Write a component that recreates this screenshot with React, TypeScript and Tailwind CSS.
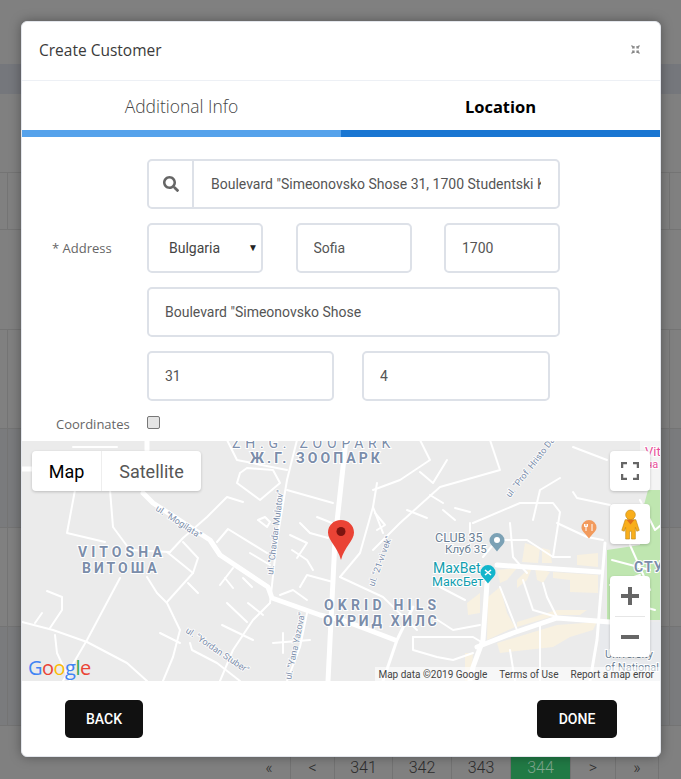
import React from 'react';
import { FaSearch } from 'react-icons/fa';

const inputClass =
  'h-[50px] min-w-0 rounded-[5px] border-2 border-[#dde1e8] bg-white px-[16px] text-[14px] text-[#555] outline-none';

// road polylines, in page coordinates so they line up with the screenshot
const thickRoads = [
  '143,493 153,503 210,540 220,555 268,587 272,598 320,615 345,621 395,640',
  '346,440 335,540 328,681',
  '497,565 600,572',
  '487,583 483,640 473,667 470,681',
  '477,647 513,633 557,618 610,622',
  '22,469 32,469',
  '147,440 147,450',
];

const midRoads = ['605,543 597,640 590,681', '383,681 397,640 413,607'];

const thinRoads = [
  '75,490 67,533 105,542',
  '110,490 113,527 130,550 170,552',
  '170,552 183,538 207,517 227,497 243,502',
  '183,542 198,558 193,573 167,602',
  '167,552 193,573',
  '188,583 198,593',
  '147,577 157,593 167,603 180,630 173,657 163,681',
  '120,578 87,640 63,681',
  '22,622 53,630 87,642 127,663 147,681',
  '47,591 62,597 62,610 50,628',
  '35,623 42,613',
  '55,635 57,653 70,681',
  '160,633 180,643',
  '190,643 192,650 217,663 240,681',
  '270,603 277,540 287,480 297,440',
  '270,603 253,620 233,650 220,681',
  '227,603 247,622',
  '248,603 263,615',
  '222,625 253,640',
  '220,585 233,568',
  '225,578 233,588',
  '243,578 252,587',
  '217,542 228,529 267,553',
  '250,553 270,565',
  '258,520 265,517 270,522 267,527 258,520',
  '287,490 333,503',
  '317,517 332,523',
  '300,523 310,533 328,538',
  '290,535 307,543 297,558',
  '292,550 307,560 313,570',
  '300,587 307,575 333,582',
  '307,613 300,647 287,681',
  '280,595 293,590 307,600',
  '283,633 283,653',
  '273,643 310,640',
  '73,447 117,447',
  '240,473 237,483 260,500 280,483 273,470 247,468 240,473',
  '227,440 237,460 287,470',
  '340,577 383,597 417,630',
  '373,507 360,553 340,577',
  '377,483 373,507 383,533',
  '375,513 385,525 377,530',
  '490,440 500,470 440,487 400,523 373,550',
  '473,523 520,503 553,503 560,512 553,557',
  '560,478 540,490 533,520',
  '573,492 577,498 610,505',
  '557,523 587,537 603,540',
  '470,523 470,533',
  '510,523 513,557 527,573',
  '483,557 497,540 527,540 553,557 570,557',
  '523,580 533,610 557,617',
  '500,587 517,630',
  '543,583 547,597 557,617',
  '413,637 473,637 483,643',
  '413,637 413,650 437,657 453,660 473,653',
  '420,472 433,483 447,460',
  '407,510 427,518',
  '430,495 443,503',
  '443,510 455,520',
  '455,508 470,512',
  '420,440 430,460 400,480 373,490',
  '573,447 607,460',
  '640,500 655,530 661,525',
  '612,560 650,570',
  '618,600 655,610',
  '630,545 650,590',
  '610,585 640,575',
  '440,587 465,600',
  '433,617 453,630 480,625',
  '540,625 540,681',
  '510,650 515,681',
];

const beige = [
  'M467 603L480 593L480 613L468 615Z',
  'M488 597L500 587L507 613L515 627L487 640Z',
  'M497 570L517 568L507 580L500 583Z',
  'M517 580L527 570L532 568L527 580L517 588Z',
  'M535 568L550 572L543 583L537 580Z',
  'M525 543L540 548L538 563L522 562Z',
  'M542 548L550 550L552 563L542 563Z',
  'M577 555L598 553L598 567L577 565Z',
  'M553 572L598 575L598 593L570 592L570 580L553 578Z',
  'M517 622L557 610L587 610L580 615L557 615L517 627Z',
  'M497 643L557 625L597 622L593 630L570 637L553 647L500 653Z',
  'M465 653L473 653L471 681L465 681Z',
];

const Label = ({ x, y, size, spacing, weight = 700, children }: { x: number; y: number; size: number; spacing: number; weight?: number; children: string }) => (
  <text x={x} y={y} fontSize={size} letterSpacing={spacing} fontWeight={weight} fill="#7b8daa" stroke="#fff" strokeWidth={2} paintOrder="stroke" fontFamily="Roboto, sans-serif">
    {children}
  </text>
);

const RoadName = ({ x, y, angle, children }: { x: number; y: number; angle: number; children: string }) => (
  <text x={x} y={y} transform={`rotate(${angle} ${x} ${y})`} fontSize={9} fill="#7b8daa" stroke="#fff" strokeWidth={1.5} paintOrder="stroke" fontFamily="Roboto, sans-serif">
    {children}
  </text>
);

function MapDrawing() {
  return (
    <svg viewBox="22 441 638 240" className="block h-[240px] w-[638px]">
      <rect x="22" y="441" width="638" height="240" fill="#ebebeb" />
      {/* park */}
      <path d="M648 490H661V620H607V550L640 545L640 520Z" fill="#bfe6b0" />
      <path d="M640 441H661V490H640Z" fill="#f4f4f4" />
      <path d="M600 622H661V681H600Z" fill="#e8eaed" />
      {/* built-up blocks */}
      <g fill="#f8f1e1">
        {beige.map((d) => (
          <path key={d} d={d} />
        ))}
      </g>
      <g fill="none" stroke="#fff" strokeLinejoin="round" strokeLinecap="round">
        <g strokeWidth={2}>
          {thinRoads.map((p) => (
            <polyline key={p} points={p} />
          ))}
        </g>
        <g strokeWidth={3}>
          {midRoads.map((p) => (
            <polyline key={p} points={p} />
          ))}
        </g>
        <g strokeWidth={5}>
          {thickRoads.map((p) => (
            <polyline key={p} points={p} />
          ))}
        </g>
      </g>
      <Label x={232} y={448} size={14} spacing={4.8} weight={400}>ZH.G. ZOOPARK</Label>
      <Label x={250} y={463} size={14} spacing={3.1}>Ж.Г. ЗООПАРК</Label>
      <Label x={78} y={557} size={14} spacing={4.1}>VITOSHA</Label>
      <Label x={82} y={573} size={14} spacing={3}>ВИТОША</Label>
      <Label x={324} y={610} size={14} spacing={4.2}>OKRID HILS</Label>
      <Label x={323} y={626} size={14} spacing={2.7}>ОКРИД ХИЛС</Label>
      <Label x={634} y={572} size={14} spacing={1}>СТУ</Label>
      <RoadName x={155} y={510} angle={33}>ul. "Mogilata"</RoadName>
      <RoadName x={273} y={575} angle={-83}>ul. "Chavdar Mulatov"</RoadName>
      <RoadName x={185} y={632} angle={34}>ul. "Yordan Stuber"</RoadName>
      <RoadName x={291} y={680} angle={-78}>ul. "Yana Yazova"</RoadName>
      <RoadName x={374} y={587} angle={-70}>ul. "21-vi vek"</RoadName>
      <RoadName x={510} y={498} angle={-52}>ul. "Prof. Hristo Danov"</RoadName>
      <g fontFamily="Roboto, sans-serif" stroke="#fff" strokeWidth={2} paintOrder="stroke">
        <text x={435} y={542} fontSize={12.5} fill="#6b7f95">CLUB 35</text>
        <text x={445} y={553} fontSize={11.5} fill="#6b7f95">Клуб 35</text>
        <text x={433} y={573} fontSize={14} fill="#129eaf">MaxBet</text>
        <text x={432} y={586} fontSize={12.5} fill="#129eaf">МаксБет</text>
        <text x={645} y={456} fontSize={13} fill="#e94f9a">Vit</text>
        <text x={646} y={468} fontSize={11} fill="#e94f9a">на</text>
        <text x={605} y={658} fontSize={11} fill="#6b7f95">University</text>
        <text x={605} y={671} fontSize={11} fill="#6b7f95">of National</text>
      </g>
      {/* poi pins */}
      <path d="M497 533a7.500 7.500 0 0 1 7.500 7.500c0 4-4.500 6.500-7.500 11c-3-4.500-7.500-7-7.500-11a7.500 7.500 0 0 1 7.500-7.500Z" fill="#7ba1b5" />
      <circle cx="497" cy="540" r="3" fill="#fff" />
      <path d="M488 565a7.500 7.500 0 0 1 7.500 7.500c0 4-4.500 6.500-7.500 11c-3-4.500-7.500-7-7.500-11a7.500 7.500 0 0 1 7.500-7.500Z" fill="#12b5cb" />
      <path d="M485 570l6 5M491 570l-6 5" stroke="#fff" strokeWidth={1.500} />
      <path d="M589 520a7.500 7.500 0 0 1 7.500 7.500c0 4-4.500 6.500-7.500 11c-3-4.500-7.500-7-7.500-11a7.500 7.500 0 0 1 7.500-7.500Z" fill="#f29a5c" />
      <path d="M586 524v7M592 524v7M584.500 524v2.500h3v-2.500" stroke="#fff" strokeWidth={1} fill="none" />
      {/* marker */}
      <path d="M341 520c7.500 0 13 5.500 13 12.500c0 8-9.500 14-13 27.500c-3.500-13.500-13-19.500-13-27.500c0-7 5.500-12.500 13-12.500Z" fill="#ea4335" />
      <circle cx="341" cy="531.500" r="4.500" fill="#7d1410" />
    </svg>
  );
}

function MapPanel() {
  return (
    <div className="relative h-[240px] w-[638px] overflow-hidden">
      <MapDrawing />
      <div className="absolute left-[10px] top-[10px] flex h-10 rounded-sm bg-white text-[18px] shadow-[0_1px_3px_rgba(0,0,0,0.2)]">
        <div className="flex w-[70px] items-center justify-center border-r border-[#eee] text-black">Map</div>
        <div className="flex w-[99px] items-center justify-center text-[#565656]">Satellite</div>
      </div>

      <div className="absolute left-[588px] top-[10px] flex h-10 w-10 items-center justify-center rounded-sm bg-white shadow-[0_1px_3px_rgba(0,0,0,0.2)]">
        <svg width="18" height="18" viewBox="0 0 18 18" fill="none" stroke="#666" strokeWidth="2.5">
          <path d="M1 6V1H6M12 1H17V6M17 12V17H12M6 17H1V12" />
        </svg>
      </div>

      <div className="absolute left-[588px] top-[63px] flex h-10 w-10 items-center justify-center rounded-sm bg-white shadow-[0_1px_3px_rgba(0,0,0,0.2)]">
        <svg width="19" height="31" viewBox="0 0 18 32">
          <circle cx="9" cy="6" r="5" fill="#f9ae1b" stroke="#b9820f" strokeWidth="0.6" />
          <path d="M3.500 11H14.500L18 22L15.500 23L14 19V31H10V23H8V31H4V19L2.500 23L0 22Z" fill="#f9ae1b" stroke="#b9820f" strokeWidth="0.6" />
          <path d="M5 11L9 16L13 11Z" fill="#e0701a" />
        </svg>
      </div>

      <div className="absolute left-[588px] top-[135px] flex h-[81px] w-10 flex-col items-center rounded-sm bg-white shadow-[0_1px_3px_rgba(0,0,0,0.2)]">
        <div className="flex h-10 w-full items-center justify-center">
          <svg width="18" height="18" viewBox="0 0 18 18"><path d="M7 0H11V7H18V11H11V18H7V11H0V7H7Z" fill="#666" /></svg>
        </div>
        <div className="h-px w-[30px] bg-[#e6e6e6]" />
        <div className="flex h-10 w-full items-center justify-center">
          <svg width="18" height="4" viewBox="0 0 18 4"><path d="M0 0H18V4H0Z" fill="#666" /></svg>
        </div>
      </div>

      <div className="absolute bottom-[3px] left-[6px] text-[20px] font-medium leading-none tracking-[-0.5px]" style={{ fontFamily: '"Open Sans", sans-serif' }}>
        <span className="text-[#4285f4]">G</span>
        <span className="text-[#ea4335]">o</span>
        <span className="text-[#fbbc05]">o</span>
        <span className="text-[#4285f4]">g</span>
        <span className="text-[#34a853]">l</span>
        <span className="text-[#ea4335]">e</span>
      </div>

      <div className="absolute bottom-0 right-0 flex h-[14px] w-[285px] items-center justify-end gap-[12px] bg-white/60 pr-[6px] text-[10px] text-[#444]">
        <span>Map data ©2019 Google</span>
        <span>Terms of Use</span>
        <span>Report a map error</span>
      </div>
    </div>
  );
}

function Backdrop() {
  const pages: [string, string][] = [
    ['«', 'w-[43px]'],
    ['<', 'w-[44px]'],
    ['341', 'w-[58px]'],
    ['342', 'w-[59px]'],
    ['343', 'w-[59px]'],
    ['344', 'w-[60px] bg-[#217a45] text-[#7fa78f]'],
    ['>', 'w-[45px]'],
    ['»', 'w-[43px]'],
  ];
  const rows: [string, boolean][] = [
    ['h-[57px]', true],
    ['h-[100px]', false],
    ['h-[99px]', true],
    ['h-[99px] bg-[#7a7b7d]', true],
    ['h-[99px]', true],
    ['h-[99px] bg-[#7a7b7d]', true],
  ];
  return (
    <div className="absolute inset-0">
      <div className="mt-[64px] h-[30px] bg-[#75777c]" />
      <div className="mt-[78px]">
        {rows.map(([c, split], i) => (
          <div key={i} className={`border-t border-[#747474] ${c}`}>
            {split && <div className="ml-[7px] h-full w-[663px] border-x border-[#747474]" />}
          </div>
        ))}
        <div className="border-t border-[#747474]" />
      </div>
      <div className="absolute bottom-0 left-[248px] flex h-[22px] text-[16px] font-light text-[#2d2d2d]">
        {pages.map(([t, c]) => (
          <div key={t} className={`flex items-center justify-center border-r border-[#737373] ${c}`}>{t}</div>
        ))}
      </div>
    </div>
  );
}

export default function App() {
  return (
    <div className="relative h-[779px] w-[681px] overflow-hidden bg-[#808080]" style={{ fontFamily: 'Roboto, sans-serif' }}>
      <Backdrop />
      <div className="relative ml-[21px] w-[640px] translate-y-[21px] overflow-hidden rounded-[6px] border border-[#e3e6ec] bg-white shadow-[0_0_12px_rgba(0,0,0,0.35)]">
        <div className="flex h-[59px] items-center justify-between border-b border-[#edf0f5] pl-[17px] pr-[20px]">
          <h2 className="-mt-[1px] text-[15.5px] text-[#3a3a3a]" style={{ fontFamily: '"Open Sans", sans-serif' }}>Create Customer</h2>
          <svg width="9" height="9" viewBox="0 0 9 9" className="-mt-[4px]" fill="none" stroke="#888" strokeWidth="1.2">
            <path d="M0.500 0.500L3 3M3 1v2H1M8.500 0.500L6 3M6 1v2h2M0.500 8.500L3 6M1 6h2v2M8.500 8.500L6 6M8 6H6v2" />
          </svg>
        </div>

        <div className="flex" style={{ fontFamily: '"Open Sans", sans-serif' }}>
          <div className="flex-1">
            <div className="flex h-[49px] items-center justify-center pt-[2px] text-[17.5px] font-light text-[#444]">Additional Info</div>
            <div className="h-[7px] bg-[#55a2eb]" />
          </div>
          <div className="flex-1">
            <div className="flex h-[49px] items-center justify-center pt-[3px] text-[16.5px] font-bold text-black">Location</div>
            <div className="h-[7px] bg-[#1976d2]" />
          </div>
        </div>

        <div className="grid grid-cols-[125px_413px] gap-y-[14px] pt-[22px]">
          <div />
          <div className="flex h-[50px] items-center rounded-[5px] border-2 border-[#dde1e8]">
            <div className="flex h-full w-[45px] items-center justify-center border-r-2 border-[#dde1e8]">
              <FaSearch size={16} className="text-[#666]" />
            </div>
            <input readOnly value={'Boulevard "Simeonovsko Shose 31, 1700 Studentski K'} className="h-full min-w-0 flex-1 px-[17px] text-[14px] text-[#555] outline-none" />
          </div>

          <div className="flex items-center pl-[30px] pt-[2px] text-[13px] text-[#666]" style={{ fontFamily: '"Open Sans", sans-serif' }}>* Address</div>
          <div className="grid grid-cols-[116px_116px_116px] justify-between">
            <div className="relative flex h-[50px] items-center rounded-[5px] border-2 border-[#dde1e8] pl-[20px] text-[14px] text-[#444]">
              Bulgaria
              <span className="absolute right-[3px] top-[18px] text-[10px] leading-none text-[#222]">▼</span>
            </div>
            <input readOnly value="Sofia" className={inputClass} />
            <input readOnly value="1700" className={inputClass} />
          </div>

          <div />
          <input readOnly value={'Boulevard "Simeonovsko Shose'} className={inputClass} />

          <div />
          <div className="grid grid-cols-[187px_188px] gap-x-[28px]">
            <input readOnly value="31" className={inputClass} />
            <input readOnly value="4" className={inputClass} />
          </div>

          <div className="h-[26px] pl-[34px] text-[13px] leading-[18px] text-[#666]" style={{ fontFamily: '"Open Sans", sans-serif' }}>Coordinates</div>
          <div className="h-[26px] pt-[1px]">
            <input type="checkbox" className="block h-[13px] w-[13px] appearance-none rounded-[2px] border border-[#777] bg-[#e4e4e4]" />
          </div>
        </div>

        <MapPanel />

        <div className="flex h-[75px] items-start justify-between pl-[43px] pr-[43px] pt-[19px]">
          <button className="h-[38px] w-[78px] rounded-[5px] bg-[#111] text-[14px] font-medium text-white">BACK</button>
          <button className="h-[38px] w-[80px] rounded-[5px] bg-[#111] text-[14px] font-medium text-white">DONE</button>
        </div>
      </div>
    </div>
  );
}
